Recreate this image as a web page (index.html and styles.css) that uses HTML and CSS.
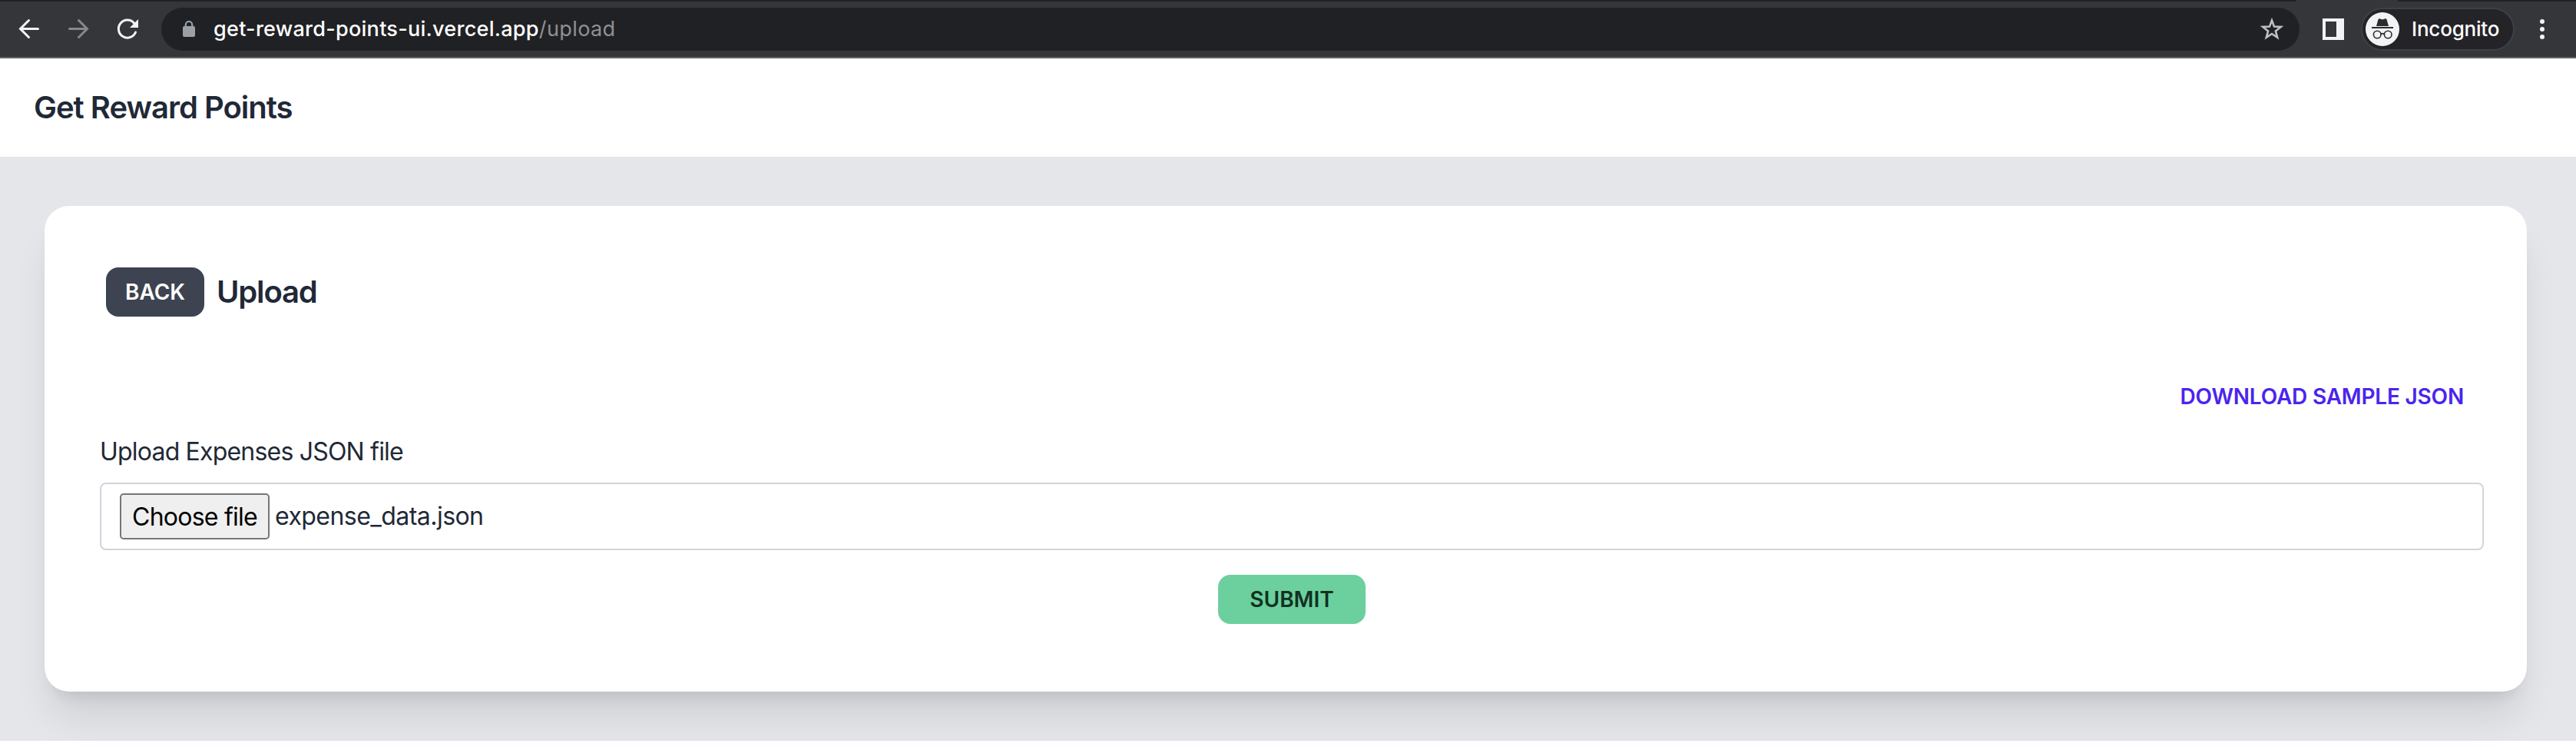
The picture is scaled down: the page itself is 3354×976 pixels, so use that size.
FILE: index.html
```html
<!DOCTYPE html>
<html lang="en">
<head>
<meta charset="utf-8">
<title>Get Reward Points</title>
<link rel="stylesheet" href="styles.css">
</head>
<body>
<div class="toolbar">
  <span class="tab-gap"></span>
  <svg class="nav-icons" width="210" height="56" viewBox="0 10 210 56" fill="none" stroke-linecap="round">
    <path d="M49.500 37.500H27M37.500 26.500L26.500 37.500L37.500 48.500" stroke="#f1f3f4" stroke-width="3"/>
    <path d="M90.500 37.500H113M102.500 26.500L113.500 37.500L102.500 48.500" stroke="#86888a" stroke-width="3"/>
    <path d="M176.500 42A11.500 11.500 0 1 1 174.500 30" stroke="#f1f3f4" stroke-width="3"/>
    <path d="M180 25V36H169Z" fill="#f1f3f4"/>
  </svg>
  <div class="omnibox">
    <svg class="lock" width="16" height="22" viewBox="0 0 16 22"><rect y="7" width="16" height="14" rx="2" fill="#9aa0a6"/><path d="M3.800 8V5.200a4.200 4.200 0 0 1 8.400 0V8" fill="none" stroke="#9aa0a6" stroke-width="2.200"/></svg>
    <div class="url"><span class="host">get-reward-points-ui.vercel.app</span><span class="path">/upload</span></div>
    <svg class="star" width="30" height="30" viewBox="0 0 30 30"><path d="M15 3.500L18 11.600L26.600 12L19.900 17.400L22.200 25.800L15 21L7.800 25.800L10.100 17.400L3.400 12L12 11.600Z" fill="none" stroke="#bdc1c6" stroke-width="2.600"/></svg>
  </div>
  <svg class="panel" width="28" height="28" viewBox="0 0 28 28"><path fill="#f1f3f4" fill-rule="evenodd" d="M0 0H28V28H0ZM4 4V24H18V4Z"/></svg>
  <div class="profile">
    <svg width="44" height="44" viewBox="0 0 44 44"><circle cx="22" cy="22" r="22" fill="#f1f3f4"/><path d="M14 18L16.500 9.300Q17 8 18.300 8.300L22 9.400L25.700 8.300Q27 8 27.500 9.300L30 18Z" fill="#2b2c30"/><path d="M8 20H36" stroke="#2b2c30" stroke-width="2"/><g fill="none" stroke="#2b2c30" stroke-width="1.600"><circle cx="15.200" cy="29" r="4.800"/><circle cx="29.200" cy="29" r="4.800"/><path d="M20 28.500Q22.200 26.800 24.400 28.500"/></g></svg>
    <span class="profile-name">Incognito</span>
  </div>
  <svg class="dots" width="6" height="26" viewBox="0 0 6 26" fill="#f1f3f4"><circle cx="3" cy="3" r="3"/><circle cx="3" cy="13" r="3"/><circle cx="3" cy="23" r="3"/></svg>
</div>
<header class="header"><h1 class="title brand">Get Reward Points</h1></header>
<main class="main">
  <section class="card">
    <div class="heading">
      <button class="btn back"><span>BACK</span></button>
      <h2 class="title page-title">Upload</h2>
    </div>
    <div class="actions"><a class="download">DOWNLOAD SAMPLE JSON</a></div>
    <label class="label"><span>Upload Expenses JSON file</span></label>
    <div class="file-field">
      <button class="choose"><span>Choose file</span></button>
      <span class="file-name">expense_data.json</span>
    </div>
    <button class="btn submit"><span>SUBMIT</span></button>
  </section>
</main>
</body>
</html>
```
FILE: styles.css
```css
* { box-sizing: border-box; }
body { margin: 0; height: 976px; overflow: hidden; background: #fff; color: #1f2937; font-family: Inter, "Liberation Sans", sans-serif; }
h1, h2 { margin: 0; }
button { font-family: inherit; margin: 0; padding: 0; border: 0; }
svg { display: block; flex: none; }
span, a { white-space: nowrap; }

.toolbar { position: relative; display: flex; align-items: center; height: 76px; background: #35363a; border-top: 2px solid #202124; border-bottom: 2px solid #5f6064; }
.tab-gap { position: absolute; top: -2px; left: 2990px; width: 132px; height: 2px; background: #35363a; }
.omnibox { display: flex; align-items: center; width: 2784px; height: 56px; padding: 0 21px 0 28px; border-radius: 28px; background: #202124; }
.url { flex: 1; margin-left: 24px; font-size: 27px; font-weight: 500; line-height: 36px; letter-spacing: 0.28px; color: #fff; }
.path { color: #8f9092; font-weight: 400; letter-spacing: 0.4px; }
.panel { margin-left: 30px; }
.profile { display: flex; align-items: center; width: 200px; height: 56px; margin-left: 22px; padding-left: 4px; border: 2px solid #3f4045; border-radius: 28px; background: #242328; }
.profile-name { margin-left: 16px; font-size: 26px; font-weight: 500; line-height: 36px; letter-spacing: -0.2px; color: #fff; }
.dots { margin-left: 33px; }

.header { display: flex; align-items: center; height: 128px; padding-left: 44px; }
.title { font-size: 40px; font-weight: 600; line-height: 56px; letter-spacing: -1px; }
.main { height: 760px; padding: 64px 64px 64px 58px; background: #e5e6ea; }
.card { display: flex; flex-direction: column; height: 632px; padding: 80px 56px 0 72px; border-radius: 32px; background: #fff; box-shadow: 0 40px 50px -10px rgba(0,0,0,.1), 0 16px 20px -12px rgba(0,0,0,.1); }
.heading { display: flex; align-items: center; height: 64px; padding-left: 8px; }
.btn { display: flex; align-items: center; justify-content: center; height: 64px; border-radius: 16px; font-size: 28px; font-weight: 600; line-height: 28px; }
.back { width: 128px; background: #3d4350; color: #fff; }
.page-title { margin-left: 16px; letter-spacing: -1.15px; }
.actions { display: flex; justify-content: flex-end; margin-top: 72px; padding-right: 26px; }
.download { font-size: 28px; font-weight: 600; line-height: 64px; letter-spacing: -0.2px; color: #4b24ee; }
.label { display: block; margin-top: 16px; font-size: 32px; line-height: 48px; letter-spacing: -0.8px; }
.file-field { display: flex; align-items: center; height: 88px; margin-top: 16px; padding-left: 24px; border: 2px solid #d1d5db; border-radius: 8px; font-size: 32px; line-height: 48px; }
.choose { width: 195px; height: 60px; border: 2px solid #767676; border-radius: 5px; background: #efefef; color: #000; font-size: 32px; letter-spacing: -0.75px; }
.file-name { margin-left: 7px; letter-spacing: -0.55px; }
.submit { align-self: center; width: 192px; margin-top: 32px; background: #6bd09e; color: #113123; }
```
